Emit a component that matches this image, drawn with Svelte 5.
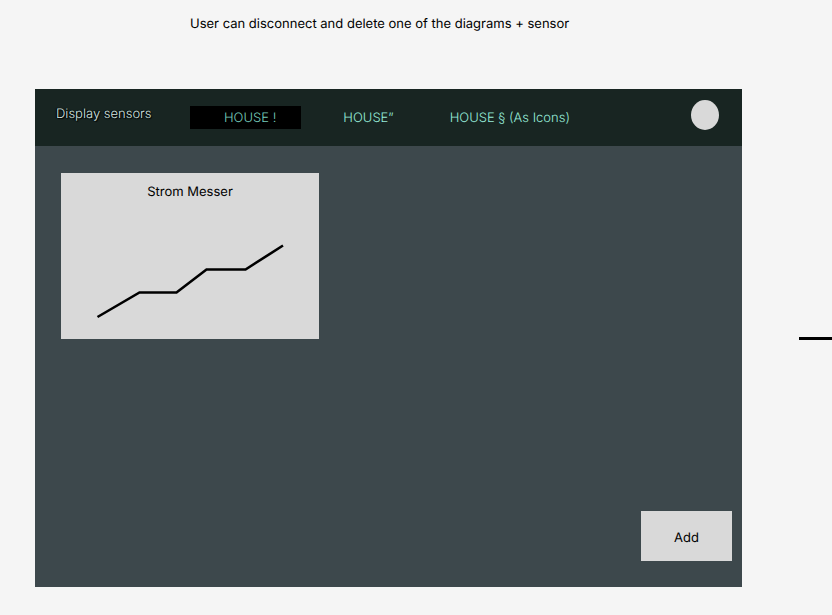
<script>
  const houses = ['HOUSE !', 'HOUSE”', 'HOUSE § (As Icons)'];
  let selected = $state(0);
</script>

<main class="page">
  <p class="caption">User can disconnect and delete one of the diagrams + sensor</p>

  <div class="flow">
    <section class="frame">
      <header class="bar">
        <h1>Display sensors</h1>
        <nav>
          {#each houses as house, i}
            <button class="tab" class:active={selected === i} onclick={() => (selected = i)}>{house}</button>
          {/each}
        </nav>
        <button class="avatar" aria-label="Account"></button>
      </header>

      <div class="content">
        <article class="card">
          <h2>Strom Messer</h2>
          <svg viewBox="0 0 258 128" aria-hidden="true">
            <polyline points="36.5,117 78.5,92.5 115.5,92.5 145.5,69.5 184.5,69.5 222,45.5" />
          </svg>
        </article>
        <button class="add">Add</button>
      </div>
    </section>

    <div class="connector"></div>
  </div>
</main>

<style>
  :global(body) {
    margin: 0;
    background: #f5f5f5;
  }
  .page {
    font-family: Inter, 'Liberation Sans', sans-serif;
    font-size: 13px;
    line-height: 16px;
    text-rendering: geometricPrecision;
    color: #000;
    padding: 16px 0 28px 35px;
  }
  .caption {
    margin: 0 0 57px;
    padding-left: 155px;
  }
  .flow {
    display: flex;
    align-items: center;
    gap: 57px;
  }
  .frame {
    flex: 1;
    display: flex;
    flex-direction: column;
    min-height: 498px;
    background: #3d484c;
  }
  .bar {
    display: flex;
    align-items: flex-start;
    box-sizing: border-box;
    min-height: 57px;
    padding: 11px 23px 11px 21px;
    background: #182522;
  }
  h1,
  h2 {
    margin: 0;
    font-size: 13px;
    font-weight: 400;
  }
  h1 {
    width: 134px;
    padding-top: 6px;
    font-weight: 300;
    color: #d4e6e2;
    text-shadow: 0 0 1px #000, 1px 1px 1px #000, -1px 0 1px #000;
  }
  nav {
    display: flex;
    flex: 1;
    gap: 8px;
    padding-top: 6px;
  }
  button {
    border: 0;
    padding: 0;
    font: inherit;
    text-rendering: inherit;
    cursor: pointer;
  }
  .tab {
    height: 23px;
    padding: 0 14px 0 34px;
    background: transparent;
    color: #97ecda;
    font-weight: 300;
    white-space: nowrap;
  }
  .tab.active {
    padding-right: 25px;
    background: #000;
    color: #76cbbb;
  }
  .avatar {
    width: 28px;
    height: 30px;
    border-radius: 50%;
    background: #d9d9d9;
  }
  .content {
    flex: 1;
    display: flex;
    justify-content: space-between;
    padding: 27px 10px 26px 26px;
  }
  .card {
    align-self: flex-start;
    width: 258px;
    padding: 11px 0;
    background: #d9d9d9;
    text-align: center;
  }
  svg {
    display: block;
    width: 100%;
  }
  polyline {
    fill: none;
    stroke: #000;
    stroke-width: 2.6;
  }
  .add {
    align-self: flex-end;
    width: 91px;
    height: 50px;
    padding-top: 3px;
    background: #d9d9d9;
    color: #000;
  }
  .connector {
    width: 33px;
    height: 3px;
    background: #000;
  }
</style>
